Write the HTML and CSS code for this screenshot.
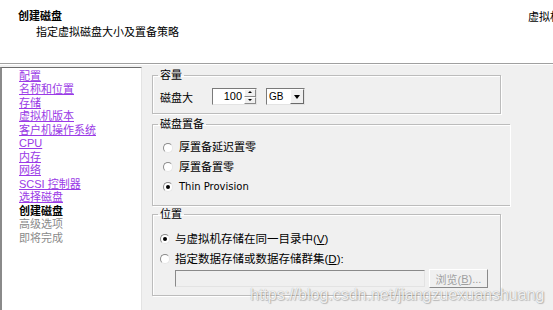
FILE: index.html
```html
<!DOCTYPE html>
<html lang="zh-CN">
<head>
<meta charset="utf-8">
<title>创建磁盘</title>
<link rel="stylesheet" href="styles.css">
</head>
<body>
<div class="win">
  <header class="head">
    <div class="head-main">
      <div class="title">创建磁盘</div>
      <div class="subtitle">指定虚拟磁盘大小及置备策略</div>
    </div>
    <div class="head-side">虚拟机</div>
  </header>
  <div class="body">
    <nav class="steps">
      <a class="step link">配置</a>
      <a class="step link">名称和位置</a>
      <a class="step link">存储</a>
      <a class="step link">虚拟机版本</a>
      <a class="step link">客户机操作系统</a>
      <a class="step link">CPU</a>
      <a class="step link">内存</a>
      <a class="step link">网络</a>
      <a class="step link">SCSI 控制器</a>
      <a class="step link">选择磁盘</a>
      <span class="step current">创建磁盘</span>
      <span class="step pending">高级选项</span>
      <span class="step pending">即将完成</span>
    </nav>
    <main class="content">
      <fieldset class="group g-cap">
        <legend>容量</legend>
        <div class="cap-row">
          <span class="cap-label">磁盘大</span>
          <span class="spin">
            <span class="spin-val">100</span>
            <span class="spin-btns"><span class="sb up"></span><span class="sb down"></span></span>
          </span>
          <span class="combo">
            <span class="combo-val">GB</span>
            <span class="combo-btn"></span>
          </span>
        </div>
      </fieldset>
      <fieldset class="group g-prov">
        <legend>磁盘置备</legend>
        <div class="radio"><span class="dot"></span><span>厚置备延迟置零</span></div>
        <div class="radio"><span class="dot"></span><span>厚置备置零</span></div>
        <div class="radio"><span class="dot on"></span><span class="latin">Thin Provision</span></div>
      </fieldset>
      <fieldset class="group g-loc">
        <legend>位置</legend>
        <div class="radio r2"><span class="dot on"></span><span>与虚拟机存储在同一目录中(<u>V</u>)</span></div>
        <div class="radio r2"><span class="dot"></span><span>指定数据存储或数据存储群集(<u>D</u>):</span></div>
        <div class="path-row">
          <span class="path-box"></span>
          <span class="browse">浏览(<u>B</u>)...</span>
        </div>
      </fieldset>
    </main>
  </div>
  <div class="watermark">https://blog.csdn.net/jiangzuexuanshuang</div>
</div>
</body>
</html>
```
FILE: styles.css
```css
html, body {
  margin: 0;
  padding: 0;
}
body {
  width: 553px;
  height: 310px;
  overflow: hidden;
  background: #f0f0f0;
  font-family: "Liberation Sans", "Noto Sans CJK SC", sans-serif;
  font-size: 11px;
  color: #000;
}
.win {
  position: relative;
  width: 553px;
  height: 310px;
  overflow: hidden;
}
.head {
  display: flex;
  height: 63px;
  background: #fff;
  border-bottom: 1px solid #a0a0a0;
  box-shadow: 0 1px 0 #fff;
}
.head-main {
  flex: 1;
  padding-top: 10px;
  line-height: 13px;
}
.title {
  margin-left: 18px;
  font-weight: bold;
}
.subtitle {
  margin-left: 36px;
  margin-top: 3px;
}
.head-side {
  width: 25px;
  padding-top: 11px;
  line-height: 13px;
  white-space: nowrap;
}
.body {
  display: flex;
  padding-top: 3px;
}
.steps {
  box-sizing: border-box;
  width: 142px;
  height: 250px;
  background: #fff;
  border-top: 1px solid #6d6d6d;
  border-left: 2px solid #8a8a8a;
  border-right: 1px solid #e3e3e3;
  padding: 1.5px 0 0 17px;
  display: flex;
  flex-direction: column;
  line-height: 13.5px;
}
.step {
  white-space: nowrap;
}
.link {
  color: #9a3ae6;
  text-decoration: underline;
}
.current {
  font-weight: bold;
}
.pending {
  color: #8a8a8a;
}
.content {
  padding: 2px 0 0 10px;
  display: flex;
  flex-direction: column;
}
.group {
  box-sizing: border-box;
  margin: 0;
  min-width: 0;
  padding: 0 0 0 5px;
  border: 1px solid #bcbcbc;
  box-shadow: inset 1px 1px 0 #fff, 1px 1px 0 #fff;
}
.group legend {
  padding: 0 2px;
  line-height: 13px;
}
.g-cap {
  width: 349px;
  height: 45px;
}
.g-prov {
  width: 358px;
  height: 88px;
  margin-top: 4px;
  border-right: none;
}
.g-loc {
  width: 349px;
  height: 88px;
  margin-top: 2px;
}
.cap-row {
  display: flex;
  align-items: center;
  margin-top: 6px;
  margin-left: 2px;
}
.cap-label {
  width: 52px;
}
.spin {
  box-sizing: border-box;
  display: flex;
  align-items: center;
  width: 45px;
  height: 17px;
  background: #fff;
  border: 1px solid;
  border-color: #7a7a7a #e3e3e3 #e3e3e3 #7a7a7a;
}
.spin-val {
  flex: 1;
  text-align: right;
  padding-right: 2px;
  line-height: 13px;
}
.spin-btns {
  display: flex;
  flex-direction: column;
  width: 12px;
  height: 15px;
}
.sb {
  flex: 1;
  position: relative;
  background: #f0f0f0;
  border: 1px solid;
  border-color: #fff #8a8a8a #8a8a8a #fff;
}
.sb::after {
  content: "";
  position: absolute;
  left: 3px;
  top: 1px;
  border-left: 2px solid transparent;
  border-right: 2px solid transparent;
}
.sb.up::after {
  border-bottom: 2px solid #000;
}
.sb.down::after {
  border-top: 2px solid #000;
}
.combo {
  box-sizing: border-box;
  display: flex;
  align-items: center;
  width: 39px;
  height: 17px;
  margin-left: 9px;
  background: #fff;
  border: 1px solid;
  border-color: #7a7a7a #e3e3e3 #e3e3e3 #7a7a7a;
}
.combo-val {
  flex: 1;
  padding-left: 2px;
  font-size: 10px;
  line-height: 13px;
}
.combo-btn {
  position: relative;
  box-sizing: border-box;
  width: 14px;
  height: 15px;
  background: #f0f0f0;
  border: 1px solid;
  border-color: #fff #6a6a6a #6a6a6a #fff;
}
.combo-btn::after {
  content: "";
  position: absolute;
  left: 3px;
  top: 5px;
  border-left: 3.5px solid transparent;
  border-right: 3.5px solid transparent;
  border-top: 4px solid #000;
}
.radio {
  display: flex;
  align-items: center;
  gap: 6px;
  height: 19.5px;
  margin-left: 5px;
  line-height: 13px;
}
.g-prov .radio:first-of-type {
  margin-top: 7px;
}
.latin {
  font-family: "DejaVu Sans", "Liberation Sans", sans-serif;
  font-size: 10px;
}
.dot {
  box-sizing: border-box;
  position: relative;
  width: 10px;
  height: 10px;
  border-radius: 50%;
  background: #fff;
  border: 1px solid;
  border-color: #8a8a8a #e6e6e6 #e6e6e6 #8a8a8a;
}
.dot.on::after {
  content: "";
  position: absolute;
  left: 2px;
  top: 2px;
  width: 4px;
  height: 4px;
  border-radius: 50%;
  background: #000;
}
.r2 {
  margin-left: 2px;
  gap: 5px;
  height: 20px;
  font-size: 11.5px;
}
.g-loc .r2:first-of-type {
  margin-top: 8px;
}
.path-row {
  display: flex;
  align-items: center;
  margin-left: 17px;
}
.path-box {
  box-sizing: border-box;
  width: 250px;
  height: 17px;
  background: #f0f0f0;
  border: 1px solid;
  border-color: #8a8a8a #e3e3e3 #e3e3e3 #8a8a8a;
}
.browse {
  box-sizing: border-box;
  width: 59px;
  height: 19px;
  margin-left: 4px;
  display: flex;
  align-items: center;
  justify-content: center;
  color: #a0a0a0;
  background: #f0f0f0;
  border: 1px solid;
  border-color: #fff #8a8a8a #8a8a8a #fff;
}
.watermark {
  position: absolute;
  left: 250px;
  top: 286px;
  font-family: "Liberation Sans", sans-serif;
  font-size: 16px;
  line-height: 18px;
  color: rgba(255, 255, 255, 0.85);
  text-shadow: 0 0 1px rgba(0, 0, 0, 0.35), 1px 1px 1px rgba(0, 0, 0, 0.2);
  white-space: nowrap;
}
```
